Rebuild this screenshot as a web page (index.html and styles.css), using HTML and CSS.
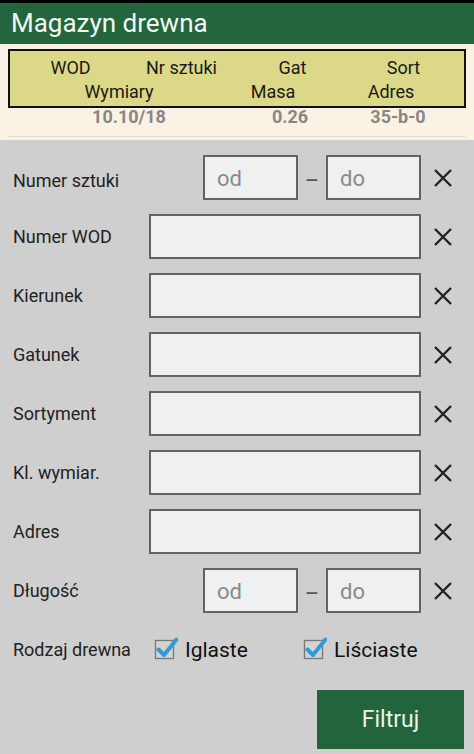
FILE: index.html
```html
<!DOCTYPE html>
<html lang="pl">
<head>
<meta charset="utf-8">
<title>Magazyn drewna</title>
<link rel="stylesheet" href="styles.css">
</head>
<body>
<div class="screen">
  <div class="statusbar"></div>
  <header class="appbar"><h1 class="title">Magazyn drewna</h1></header>
  <section class="summary">
    <div class="legend">
      <div class="legend-row row-a"><span>WOD</span><span>Nr sztuki</span><span>Gat</span><span>Sort</span></div>
      <div class="legend-row row-b"><span>Wymiary</span><span>Masa</span><span>Adres</span></div>
    </div>
    <div class="values"><span>10.10/18</span><span>0.26</span><span>35-b-0</span></div>
    <div class="divider"></div>
  </section>
  <form class="filters">
    <div class="frow">
      <label class="flabel low">Numer sztuki</label>
      <div class="range"><div class="inp small"><span class="ph">od</span></div><span class="dash">–</span><div class="inp small"><span class="ph">do</span></div></div>
      <span class="clear"><svg viewBox="0 0 20 20" width="20" height="20"><path d="M2 2L18 18M18 2L2 18" stroke="#222" stroke-width="2.4" fill="none"/></svg></span>
    </div>
    <div class="frow">
      <label class="flabel">Numer WOD</label>
      <div class="inp wide"></div>
      <span class="clear"><svg viewBox="0 0 20 20" width="20" height="20"><path d="M2 2L18 18M18 2L2 18" stroke="#222" stroke-width="2.4" fill="none"/></svg></span>
    </div>
    <div class="frow">
      <label class="flabel">Kierunek</label>
      <div class="inp wide"></div>
      <span class="clear"><svg viewBox="0 0 20 20" width="20" height="20"><path d="M2 2L18 18M18 2L2 18" stroke="#222" stroke-width="2.4" fill="none"/></svg></span>
    </div>
    <div class="frow">
      <label class="flabel">Gatunek</label>
      <div class="inp wide"></div>
      <span class="clear"><svg viewBox="0 0 20 20" width="20" height="20"><path d="M2 2L18 18M18 2L2 18" stroke="#222" stroke-width="2.4" fill="none"/></svg></span>
    </div>
    <div class="frow">
      <label class="flabel">Sortyment</label>
      <div class="inp wide"></div>
      <span class="clear"><svg viewBox="0 0 20 20" width="20" height="20"><path d="M2 2L18 18M18 2L2 18" stroke="#222" stroke-width="2.4" fill="none"/></svg></span>
    </div>
    <div class="frow">
      <label class="flabel">Kl. wymiar.</label>
      <div class="inp wide"></div>
      <span class="clear"><svg viewBox="0 0 20 20" width="20" height="20"><path d="M2 2L18 18M18 2L2 18" stroke="#222" stroke-width="2.4" fill="none"/></svg></span>
    </div>
    <div class="frow">
      <label class="flabel">Adres</label>
      <div class="inp wide"></div>
      <span class="clear"><svg viewBox="0 0 20 20" width="20" height="20"><path d="M2 2L18 18M18 2L2 18" stroke="#222" stroke-width="2.4" fill="none"/></svg></span>
    </div>
    <div class="frow">
      <label class="flabel">Długość</label>
      <div class="range"><div class="inp small"><span class="ph">od</span></div><span class="dash">–</span><div class="inp small"><span class="ph">do</span></div></div>
      <span class="clear"><svg viewBox="0 0 20 20" width="20" height="20"><path d="M2 2L18 18M18 2L2 18" stroke="#222" stroke-width="2.4" fill="none"/></svg></span>
    </div>
    <div class="frow">
      <label class="flabel">Rodzaj drewna</label>
      <div class="checks">
        <span class="check"><svg class="cbox" viewBox="0 0 24 24" width="24" height="24"><rect x="1.5" y="4.5" width="18" height="18" fill="#d3d3d3" stroke="#777" stroke-width="1.3"/><path d="M4.5 13.5L10 19L22.5 3.5" stroke="#2f9bd5" stroke-width="4" fill="none" stroke-linecap="round" stroke-linejoin="round"/></svg><span class="ctext">Iglaste</span></span>
        <span class="check"><svg class="cbox" viewBox="0 0 24 24" width="24" height="24"><rect x="1.5" y="4.5" width="18" height="18" fill="#d3d3d3" stroke="#777" stroke-width="1.3"/><path d="M4.5 13.5L10 19L22.5 3.5" stroke="#2f9bd5" stroke-width="4" fill="none" stroke-linecap="round" stroke-linejoin="round"/></svg><span class="ctext">Liściaste</span></span>
      </div>
    </div>
    <div class="actions"><button type="button" class="btn">Filtruj</button></div>
  </form>
</div>
</body>
</html>
```
FILE: styles.css
```css
* { box-sizing: border-box; }
html, body { margin: 0; padding: 0; }
body {
  width: 474px;
  height: 754px;
  background: #cfcfcf;
  font-family: Roboto, "Noto Sans", sans-serif;
  overflow: hidden;
}
.screen { display: flex; flex-direction: column; height: 754px; }
.statusbar { height: 3px; background: #000; }
.appbar {
  height: 41px;
  background: #23653d;
  display: flex;
  align-items: center;
  padding-left: 11px;
}
.title {
  margin: 0;
  font-weight: 400;
  font-size: 26px;
  color: #f1f8f1;
  line-height: 1;
  padding-bottom: 2px;
}
.summary {
  background: #f9f2e5;
  padding: 5px 8px 3px;
}
.legend {
  background: #dbd888;
  border: 2px solid #111;
  height: 59px;
  padding: 5px 0 0;
  font-size: 18px;
  color: #1a1a1a;
}
.legend-row { display: grid; line-height: 24px; }
.legend-row span { text-align: center; }
.row-a { grid-template-columns: 5px 111px 111px 111px 111px; }
.row-a span:first-child { grid-column: 2; }
.row-b { grid-template-columns: 218px 90px 146px; }
.values {
  display: grid;
  grid-template-columns: 242px 80px 136px;
  font-size: 18px;
  font-weight: 700;
  color: #8b8684;
  line-height: 18px;
  height: 18px;
}
.values span { text-align: center; }
.divider { height: 1px; background: #e2dcd2; margin-top: 10px; }
.filters {
  display: flex;
  flex-direction: column;
  gap: 14px;
  padding-top: 15px;
}
.frow {
  display: grid;
  grid-template-columns: 136px 272px 1fr;
  align-items: center;
  height: 45px;
  padding-left: 13px;
}
.flabel { font-size: 18px; color: #222; }
.low { padding-top: 6px; }
.inp {
  height: 45px;
  background: #f0f0f0;
  border: 2px solid #6a605c;
  display: flex;
  align-items: center;
  padding-left: 12px;
}
.small { width: 95px; }
.range { display: flex; justify-content: flex-end; align-items: center; }
.dash {
  width: 28px;
  text-align: center;
  font-size: 22px;
  color: #555;
  padding-top: 5px;
}
.ph { font-size: 22px; color: #8a8a8a; line-height: 1; padding-top: 3px; }
.clear { display: flex; margin-left: 12px; }
.checks {
  display: grid;
  grid-template-columns: 149px 1fr;
  padding-left: 5px;
  align-items: center;
}
.check { display: flex; align-items: center; gap: 7px; }
.cbox { display: block; margin-top: -3px; }
.ctext { font-size: 21px; color: #111; }
.actions {
  display: flex;
  justify-content: flex-end;
  padding-right: 10px;
  margin-top: 4px;
}
.btn {
  width: 147px;
  height: 59px;
  background: #22653d;
  border: none;
  color: #e8f5e8;
  font-family: Roboto, "Noto Sans", sans-serif;
  font-size: 23px;
  padding: 0;
}
```
